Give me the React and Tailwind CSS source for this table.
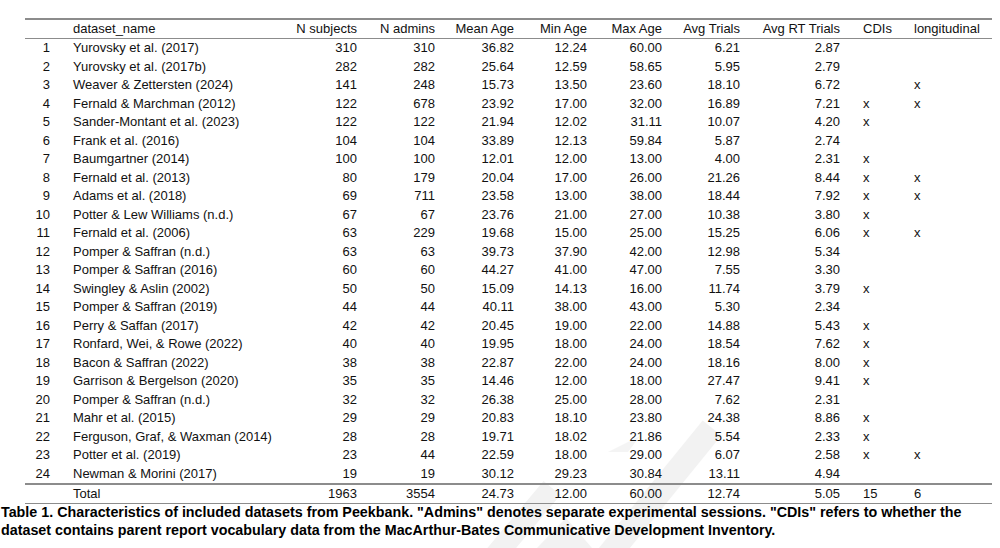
const ROWS = [
  ["Yurovsky et al. (2017)", 310, 310, "36.82", "12.24", "60.00", "6.21", "2.87", "", ""],
  ["Yurovsky et al. (2017b)", 282, 282, "25.64", "12.59", "58.65", "5.95", "2.79", "", ""],
  ["Weaver & Zettersten (2024)", 141, 248, "15.73", "13.50", "23.60", "18.10", "6.72", "", "x"],
  ["Fernald & Marchman (2012)", 122, 678, "23.92", "17.00", "32.00", "16.89", "7.21", "x", "x"],
  ["Sander-Montant et al. (2023)", 122, 122, "21.94", "12.02", "31.11", "10.07", "4.20", "x", ""],
  ["Frank et al. (2016)", 104, 104, "33.89", "12.13", "59.84", "5.87", "2.74", "", ""],
  ["Baumgartner (2014)", 100, 100, "12.01", "12.00", "13.00", "4.00", "2.31", "x", ""],
  ["Fernald et al. (2013)", 80, 179, "20.04", "17.00", "26.00", "21.26", "8.44", "x", "x"],
  ["Adams et al. (2018)", 69, 711, "23.58", "13.00", "38.00", "18.44", "7.92", "x", "x"],
  ["Potter & Lew Williams (n.d.)", 67, 67, "23.76", "21.00", "27.00", "10.38", "3.80", "x", ""],
  ["Fernald et al. (2006)", 63, 229, "19.68", "15.00", "25.00", "15.25", "6.06", "x", "x"],
  ["Pomper & Saffran (n.d.)", 63, 63, "39.73", "37.90", "42.00", "12.98", "5.34", "", ""],
  ["Pomper & Saffran (2016)", 60, 60, "44.27", "41.00", "47.00", "7.55", "3.30", "", ""],
  ["Swingley & Aslin (2002)", 50, 50, "15.09", "14.13", "16.00", "11.74", "3.79", "x", ""],
  ["Pomper & Saffran (2019)", 44, 44, "40.11", "38.00", "43.00", "5.30", "2.34", "", ""],
  ["Perry & Saffan (2017)", 42, 42, "20.45", "19.00", "22.00", "14.88", "5.43", "x", ""],
  ["Ronfard, Wei, & Rowe (2022)", 40, 40, "19.95", "18.00", "24.00", "18.54", "7.62", "x", ""],
  ["Bacon & Saffran (2022)", 38, 38, "22.87", "22.00", "24.00", "18.16", "8.00", "x", ""],
  ["Garrison & Bergelson (2020)", 35, 35, "14.46", "12.00", "18.00", "27.47", "9.41", "x", ""],
  ["Pomper & Saffran (n.d.)", 32, 32, "26.38", "25.00", "28.00", "7.62", "2.31", "", ""],
  ["Mahr et al. (2015)", 29, 29, "20.83", "18.10", "23.80", "24.38", "8.86", "x", ""],
  ["Ferguson, Graf, & Waxman (2014)", 28, 28, "19.71", "18.02", "21.86", "5.54", "2.33", "x", ""],
  ["Potter et al. (2019)", 23, 44, "22.59", "18.00", "29.00", "6.07", "2.58", "x", "x"],
  ["Newman & Morini (2017)", 19, 19, "30.12", "29.23", "30.84", "13.11", "4.94", "", ""],
];

const HEADERS = ["", "dataset_name", "N subjects", "N admins", "Mean Age", "Min Age", "Max Age", "Avg Trials", "Avg RT Trials", "CDIs", "longitudinal"];

const GRID = "grid grid-cols-[33px_222px_85px_78px_79px_73px_75px_78px_100px_52px_92px]";

// per-column alignment + padding
const CELL = [
  "text-right pr-[8px]",
  "text-left pl-[15px]",
  "text-right pr-[8px]",
  "text-right pr-[8px]",
  "text-right pr-[8px]",
  "text-right pr-[8px]",
  "text-right pr-[8px]",
  "text-right pr-[8px]",
  "text-right pr-[8px]",
  "text-left pl-[15px]",
  "text-left pl-[14px]",
];

function Row({ cells, className }) {
  return (
    <div className={`${GRID} ${className}`}>
      {cells.map((c, i) => (
        <div key={i} className={`${CELL[i]} whitespace-nowrap`}>
          {c}
        </div>
      ))}
    </div>
  );
}

function Watermark() {
  return (
    <svg className="absolute inset-0 w-[1000px] h-[548px] pointer-events-none" viewBox="0 0 1000 548">
      <line x1="603" y1="562" x2="712" y2="428" stroke="#f2f2f2" strokeWidth="24" />
      <line x1="490" y1="562" x2="552" y2="488" stroke="#f2f2f2" strokeWidth="22" />
      <polygon points="537,548 592,548 566,518" fill="#f2f2f2" />
      <polygon points="608,452 640,436 628,452" fill="#f4f4f4" />
    </svg>
  );
}

export default function App() {
  return (
    <div className="relative w-[1000px] h-[548px] bg-white overflow-hidden text-[#111] font-['Liberation_Sans',Arial,sans-serif]">
      <Watermark />
      <div className="relative">
        {/* table */}
        <div className="ml-[25px] w-[967px] mt-[18px] text-[13px]">
          <div className="h-[1.5px] bg-[#8c8c8c]" />
          <Row cells={HEADERS} className="h-[18px] leading-[18px]" />
          <div className="h-[1.5px] bg-[#8c8c8c]" />
          {ROWS.map((r, i) => (
            <Row key={i} cells={[i + 1, ...r]} className="h-[18.5px] leading-[18.5px]" />
          ))}
          <div className="h-[1.5px] bg-[#8c8c8c]" />
          <Row
            cells={["", "Total", 1963, 3554, "24.73", "12.00", "60.00", "12.74", "5.05", "15", "6"]}
            className="h-[18px] leading-[18px]"
          />
          <div className="h-[1.5px] bg-[#8c8c8c]" />
        </div>

        {/* caption */}
        <p className="pl-[1px] text-[14.3px] font-bold leading-[17.5px] text-black whitespace-nowrap">
          Table 1. Characteristics of included datasets from Peekbank. "Admins" denotes separate experimental sessions. "CDIs" refers to whether the
          <br />
          dataset contains parent report vocabulary data from the MacArthur-Bates Communicative Development Inventory.
        </p>
      </div>
    </div>
  );
}
